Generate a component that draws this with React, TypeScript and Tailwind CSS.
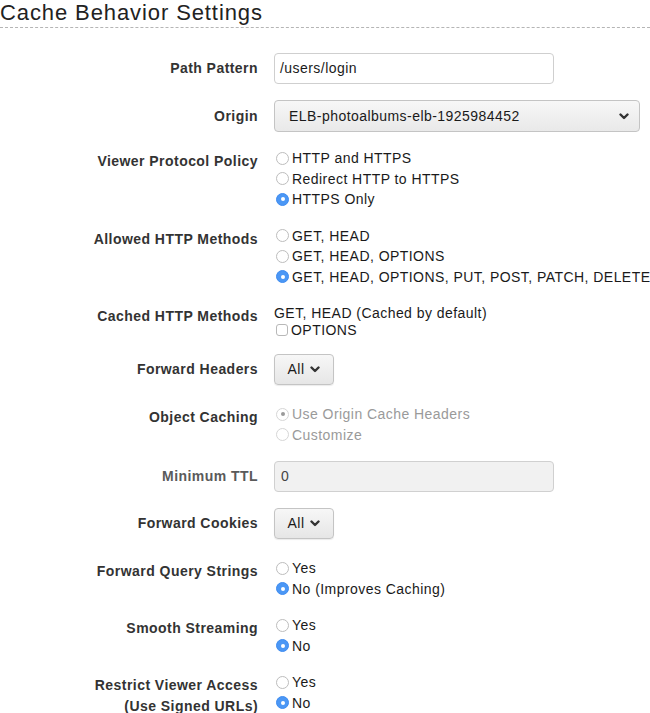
import React from 'react';

const font = { fontFamily: '"Liberation Sans", Arial, Helvetica, sans-serif' };

const Chevron: React.FC<{ className?: string }> = ({ className = '' }) => (
    <svg width="10" height="7" viewBox="0 0 10 7" className={className}>
        <polyline points="1.5,1.5 5,5 8.5,1.5" fill="none" stroke="#333" strokeWidth="2.4" strokeLinecap="round" strokeLinejoin="round" />
    </svg>
);

interface RadioProps {
    label: string;
    checked?: boolean;
    disabled?: boolean;
}

const Radio: React.FC<RadioProps> = ({ label, checked = false, disabled = false }) => {
    let circle = 'border border-[#bdbdbd] bg-white';
    if (checked && !disabled) circle = 'bg-[#4b97f5] border border-[#3f8cf0]';
    if (disabled) circle = 'border border-[#d6d6d6] bg-white';
    return (
        <div className={`flex items-center whitespace-nowrap ${disabled ? 'text-[#9a9a9a]' : 'text-[#1a1a1a]'}`}>
            <span className={`ml-[2px] mr-[3px] w-[13px] h-[13px] rounded-full flex items-center justify-center shrink-0 ${circle}`}>
                {checked && <span className={`w-[4px] h-[4px] rounded-full ${disabled ? 'bg-[#9a9a9a]' : 'bg-white'}`} />}
            </span>
            {label}
        </div>
    );
};

const Row: React.FC<{ label: React.ReactNode; top?: boolean; dim?: boolean; className?: string; children: React.ReactNode }> = ({
    label,
    top = false,
    dim = false,
    className = '',
    children,
}) => (
    <div className={`grid grid-cols-[258px_1fr] gap-x-4 ${top ? 'items-start' : 'items-center'} ${className}`}>
        <div className={`text-right font-bold leading-[20.5px] ${top ? 'pt-[3px]' : ''} ${dim ? 'text-[#5a5a5a]' : 'text-[#333]'}`}>{label}</div>
        <div className="leading-[20.5px] min-w-0">{children}</div>
    </div>
);

const DropButton: React.FC<{ value: string }> = ({ value }) => (
    <div className="w-[60px] h-[31px] flex items-center justify-center gap-[6px] rounded-[4px] border border-[#c4c4c4] bg-gradient-to-b from-[#f7f7f7] to-[#e6e6e6] text-[#1a1a1a] shadow-[0_1px_1px_rgba(0,0,0,0.08)]">
        <span>{value}</span>
        <Chevron />
    </div>
);

export default function App() {
    return (
        <div className="w-[650px] h-[713px] overflow-hidden bg-white text-[14px] tracking-[0.45px]" style={font}>
            <div className="text-[22px] leading-[26px] tracking-[0.9px] text-[#222] pb-[1px] border-b border-dashed border-[#b5b5b5]">
                Cache Behavior Settings
            </div>

            <div className="mt-[25px] flex flex-col gap-[16px]">
                <Row label="Path Pattern">
                    <div className="w-[280px] h-[31px] rounded-[4px] border border-[#cfcfcf] bg-white flex items-center pl-[5px] text-[#1a1a1a]">
                        /users/login
                    </div>
                </Row>

                <Row label="Origin">
                    <div className="w-[366px] h-[32px] rounded-[4px] border border-[#c4c4c4] bg-gradient-to-b from-[#f7f7f7] to-[#e9e9e9] flex items-center justify-between pl-[14px] pr-[10px] text-[#1a1a1a]">
                        <span>ELB-photoalbums-elb-1925984452</span>
                        <Chevron />
                    </div>
                </Row>

                <Row label="Viewer Protocol Policy" top>
                    <Radio label="HTTP and HTTPS" />
                    <Radio label="Redirect HTTP to HTTPS" />
                    <Radio label="HTTPS Only" checked />
                </Row>

                <Row label="Allowed HTTP Methods" top>
                    <Radio label="GET, HEAD" />
                    <Radio label="GET, HEAD, OPTIONS" />
                    <Radio label="GET, HEAD, OPTIONS, PUT, POST, PATCH, DELETE" checked />
                </Row>

                <Row label="Cached HTTP Methods" top>
                    <div className="text-[#1a1a1a] whitespace-nowrap leading-[16.5px] pt-[2px]">GET, HEAD (Cached by default)</div>
                    <div className="flex items-center text-[#1a1a1a] leading-[16.5px]">
                        <span className="ml-[2px] mr-[3px] w-[12px] h-[12px] rounded-[3px] border border-[#b8b8b8] bg-white" />
                        OPTIONS
                    </div>
                </Row>

                <Row label="Forward Headers">
                    <DropButton value="All" />
                </Row>

                <Row label="Object Caching" top className="mt-[3px]">
                    <Radio label="Use Origin Cache Headers" checked disabled />
                    <Radio label="Customize" disabled />
                </Row>

                <Row label="Minimum TTL" dim>
                    <div className="w-[280px] h-[31px] rounded-[4px] border border-[#d0d0d0] bg-[#f1f1f1] flex items-center pl-[6px] text-[#444]">
                        0
                    </div>
                </Row>

                <Row label="Forward Cookies">
                    <DropButton value="All" />
                </Row>

                <Row label="Forward Query Strings" top className="mt-[3px]">
                    <Radio label="Yes" />
                    <Radio label="No (Improves Caching)" checked />
                </Row>

                <Row label="Smooth Streaming" top>
                    <Radio label="Yes" />
                    <Radio label="No" checked />
                </Row>

                <Row
                    label={
                        <>
                            Restrict Viewer Access
                            <br />
                            (Use Signed URLs)
                        </>
                    }
                    top
                >
                    <Radio label="Yes" />
                    <Radio label="No" checked />
                </Row>
            </div>
        </div>
    );
}
